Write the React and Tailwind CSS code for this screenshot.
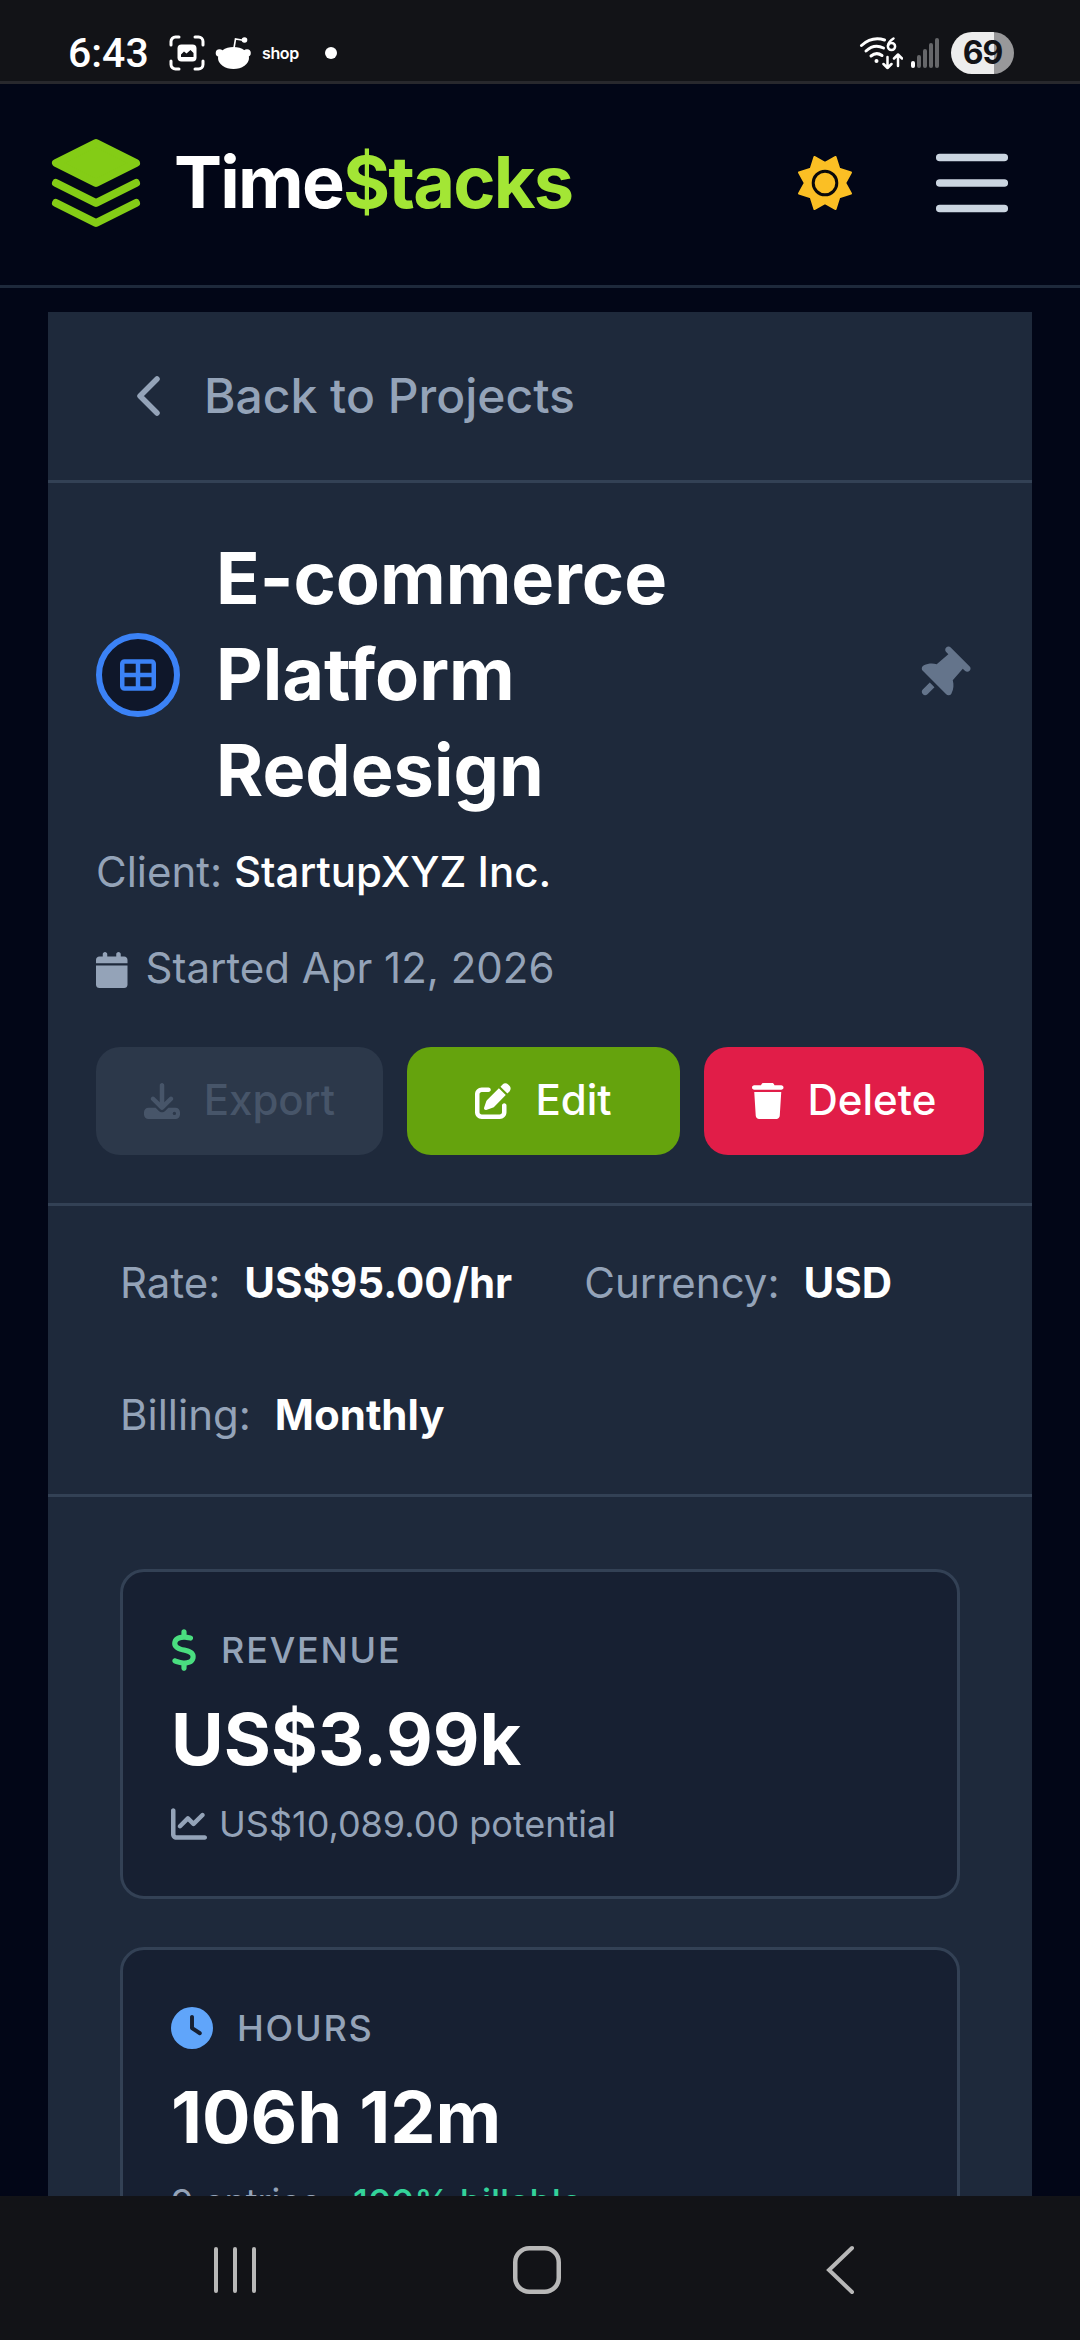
import React from "react";
import {
  FaCalendar,
  FaChartLine,
  FaClock,
  FaDollarSign,
  FaDownload,
  FaPenToSquare,
  FaTableCellsLarge,
  FaThumbtack,
  FaTrash,
} from "react-icons/fa6";

const StatusBar = () => (
  <div className="h-[84px] shrink-0 bg-[#121317] border-b-[3px] border-[#28282d] flex items-start justify-between pl-[68px] pr-[66px]">
    <div className="flex items-center h-[42px] mt-8">
      <span className="w-[101px] text-[41px] leading-[42px] font-medium text-white font-['Roboto',sans-serif]">
        6:43
      </span>
      <svg className="w-9 h-9" viewBox="0 0 36 36" fill="none">
        <path
          d="M2 10V6.5A4.500 4.500 0 0 1 6.500 2H10M26 2h3.500A4.500 4.500 0 0 1 34 6.500V10M34 26v3.500a4.500 4.500 0 0 1-4.500 4.500H26M10 34H6.500A4.500 4.500 0 0 1 2 29.500V26"
          stroke="#fff"
          strokeWidth="3"
          strokeLinecap="round"
        />
        <rect x="8.500" y="9.500" width="19" height="17" rx="4" fill="#fff" />
        <path d="M12 22v-2.500l3-3 2.500 2 4-3.500 3 3V22z" fill="#121317" />
      </svg>
      <svg className="ml-[10px] w-9 h-[34px]" viewBox="0 0 36 34">
        <path d="M19 12 20.500 3l9 1.500" stroke="#fff" strokeWidth="1.600" fill="none" />
        <circle cx="29.500" cy="4" r="2.800" fill="#fff" />
        <circle cx="4.500" cy="17" r="3.800" fill="#fff" />
        <circle cx="32" cy="17" r="3.800" fill="#fff" />
        <ellipse cx="18.500" cy="22" rx="15.500" ry="11" fill="#fff" />
      </svg>
      <span className="ml-[11px] w-[63px] text-[16px] leading-[42px] font-semibold text-white tracking-[-0.4px]">
        shop
      </span>
      <span className="w-3 h-3 rounded-full bg-white" />
    </div>
    <div className="flex items-center h-[42px] mt-8">
      <svg className="w-[44px] h-[34px]" viewBox="0 0 44 34" fill="none" stroke="#fff" strokeLinecap="round">
        <path d="M2.500 9.500Q13 0 25.500 4" strokeWidth="3" />
        <path d="M7 15q8-7.500 17.500-3" strokeWidth="3" />
        <path d="M12 20q5.500-4.500 11-.5" strokeWidth="3" />
        <circle cx="17.500" cy="25" r="2" fill="#fff" stroke="none" />
        <path d="M34.500 2.500q-5 3-5.500 7" strokeWidth="2.500" />
        <circle cx="32.500" cy="10.500" r="3.600" strokeWidth="2.500" />
        <path d="M28.500 21v11M24.500 28l4 4 4-4M39 30V19M35 22.500l4-4 4 4" strokeWidth="2.500" strokeLinejoin="round" />
      </svg>
      <div className="ml-2 flex items-end gap-[2px] h-[30px]">
        <span className="w-1 h-[7px] rounded-full bg-white" />
        <span className="w-1 h-[13px] rounded-full bg-[#66676a]" />
        <span className="w-1 h-[19px] rounded-full bg-[#66676a]" />
        <span className="w-1 h-[25px] rounded-full bg-[#66676a]" />
        <span className="w-1 h-[30px] rounded-full bg-[#66676a]" />
      </div>
      <span className="ml-3 w-[63px] h-[42px] rounded-full bg-linear-to-r from-[#ededed] from-68% to-[#98989a] to-68% text-center text-[32px] leading-[42px] font-bold text-[#121317] tracking-[-1px]">
        69
      </span>
    </div>
  </div>
);

const Header = () => (
  <header className="h-[204px] shrink-0 border-b-[3px] border-[#1e293b] flex items-center pb-[3px] pl-12 pr-[60px]">
    <svg
      className="w-24 h-24"
      viewBox="0 0 24 24"
      fill="none"
      stroke="#84cc16"
      strokeWidth="2"
      strokeLinecap="round"
      strokeLinejoin="round"
    >
      <path d="M12 2 2 7l10 5 10-5-10-5z" fill="#84cc16" />
      <path d="m2 12 10 5 10-5M2 17l10 5 10-5" />
    </svg>
    <h1 className="ml-[30px] mb-[3px] text-[72px] leading-[96px] font-bold tracking-[-1.8px] text-white">
      Time<span className="text-[#a3e635]">$tacks</span>
    </h1>
    <svg className="ml-auto w-[60px] h-[60px]" viewBox="-30 -30 60 60">
      <path
        d="M-10.600-26 0-20.200l10.600-5.800 3.700 11.700L26-10.600 20.200 0 26 10.600 14.300 14.300 10.600 26 0 20.200-10.600 26-14.300 14.300-26 10.600-20.200 0-26-10.600-14.300-14.300z"
        fill="#fbbf24"
        stroke="#fbbf24"
        strokeWidth="2"
        strokeLinejoin="round"
      />
      <circle r="11.800" fill="none" stroke="#09090b" strokeWidth="3" />
    </svg>
    <svg
      className="ml-[69px] w-24 h-24"
      viewBox="0 0 96 96"
      stroke="#cbd5e1"
      strokeWidth="7.500"
      strokeLinecap="round"
    >
      <path d="M15.700 22.500h64.600M15.700 48h64.600M15.700 73.500h64.600" />
    </svg>
  </header>
);

const InfoItem = ({ label, value }) => (
  <div className="flex gap-6 text-[42px] leading-[60px]">
    <span className="text-[#94a3b8]">{label}</span>
    <span className="font-bold text-white">{value}</span>
  </div>
);

const StatCard = ({ icon, label, value, children }) => (
  <div className="rounded-3xl border-[3px] border-[#334155] bg-[#172032] p-12">
    <div className="flex items-center gap-6 h-[60px]">
      {icon}
      <span className="text-[36px] leading-[48px] font-medium tracking-[1.8px] uppercase text-[#94a3b8]">
        {label}
      </span>
    </div>
    <div className="mt-[11px] text-[72px] leading-[96px] font-bold text-white">
      {value}
    </div>
    <div className="mt-[13px] flex items-center text-[36px] leading-[48px] text-[#94a3b8] whitespace-pre">
      {children}
    </div>
  </div>
);

const ProjectDetails = () => (
  <main className="mx-12 mt-6 bg-[#1e293b]">
    <div className="h-[171px] border-b-[3px] border-[#334155] flex items-center pl-[88px] text-[#94a3b8]">
      <svg
        className="w-6 h-12"
        viewBox="0 0 24 48"
        fill="none"
        stroke="currentColor"
        strokeWidth="5.500"
        strokeLinecap="round"
        strokeLinejoin="round"
      >
        <path d="M21 7 4 24l17 17" />
      </svg>
      <span className="ml-[44px] text-[48px] leading-[72px] font-medium">
        Back to Projects
      </span>
    </div>

    <section className="border-b-[3px] border-[#334155] p-12">
      <div className="flex items-center">
        <div className="w-[84px] h-[84px] shrink-0 rounded-full border-[6px] border-[#3b82f6] bg-[#0f172a] flex items-center justify-center">
          <FaTableCellsLarge className="w-9 h-9 text-[#3b82f6]" />
        </div>
        <h2 className="ml-9 -mt-px mb-px w-[520px] text-[72px] leading-[96px] font-bold text-white">
          E-commerce Platform Redesign
        </h2>
        <FaThumbtack className="ml-auto mr-4 w-[53px] h-[53px] rotate-45 text-[#64748b]" />
      </div>
      <p className="mt-[23px] text-[42px] leading-[60px] text-[#94a3b8]">
        Client: <span className="font-medium text-white">StartupXYZ Inc.</span>
      </p>
      <p className="mt-9 flex items-center gap-[18px] text-[42px] leading-[60px] text-[#94a3b8]">
        <FaCalendar className="w-[31.5px] h-9 mt-[3px]" />
        Started Apr 12, 2026
      </p>
      <div className="mt-[49px] flex gap-6 text-[42px] leading-[60px] font-medium text-white">
        <button className="w-[287px] h-[108px] rounded-3xl bg-[#2c384a] text-[#475569] flex items-center justify-center gap-6">
          <FaDownload className="w-9 h-9" />
          <span className="mb-[2px]">Export</span>
        </button>
        <button className="w-[274px] h-[108px] rounded-3xl bg-[#65a30d] flex items-center justify-center gap-6">
          <FaPenToSquare className="w-9 h-9" />
          <span className="mb-[2px]">Edit</span>
        </button>
        <button className="w-[280px] h-[108px] rounded-3xl bg-[#e11d48] flex items-center justify-center gap-6">
          <FaTrash className="w-[31.5px] h-9" />
          <span className="mb-[2px]">Delete</span>
        </button>
      </div>
    </section>

    <section className="border-b-[3px] border-[#334155] px-[72px] pt-[47px] pb-[49px] flex flex-wrap gap-[72px]">
      <InfoItem label="Rate:" value="US$95.00/hr" />
      <InfoItem label="Currency:" value="USD" />
      <InfoItem label="Billing:" value="Monthly" />
    </section>

    <section className="p-[72px] flex flex-col gap-12">
      <StatCard
        icon={<FaDollarSign className="w-[26px] h-[42px] text-[#4ade80]" />}
        label="Revenue"
        value="US$3.99k"
      >
        <FaChartLine className="w-9 h-9 mr-3" />
        US$10,089.00 potential
      </StatCard>
      <StatCard
        icon={<FaClock className="w-[42px] h-[42px] text-[#60a5fa]" />}
        label="Hours"
        value="106h 12m"
      >
        9 entries · <span className="ml-[2px] font-medium text-[#34d399]">100% billable</span>
      </StatCard>
    </section>
  </main>
);

const NavBar = () => (
  <nav className="h-36 shrink-0 bg-[#121317] flex items-center pt-[4px]">
    <svg className="ml-[211px] w-12 h-[50px]" viewBox="0 0 48 50" stroke="#b8b8b8" strokeWidth="4" strokeLinecap="round">
      <path d="M5 4v42M24 4v42M43 4v42" />
    </svg>
    <svg className="ml-[253px] w-[50px] h-[50px]" viewBox="0 0 50 50" fill="none" stroke="#b8b8b8" strokeWidth="4.500">
      <rect x="3.250" y="3.250" width="43.500" height="43.500" rx="14" />
    </svg>
    <svg className="ml-[260px] w-9 h-[50px]" viewBox="0 0 36 50" fill="none" stroke="#b8b8b8" strokeWidth="4" strokeLinecap="round">
      <path d="M30 3 7 25l23 22" />
    </svg>
  </nav>
);

export default function App() {
  return (
    <div className="w-[1080px] h-[2340px] overflow-hidden flex flex-col bg-[#020617] font-['Inter',sans-serif]">
      <StatusBar />
      <Header />
      <div className="flex-1 min-h-0 overflow-hidden">
        <ProjectDetails />
      </div>
      <NavBar />
    </div>
  );
}
